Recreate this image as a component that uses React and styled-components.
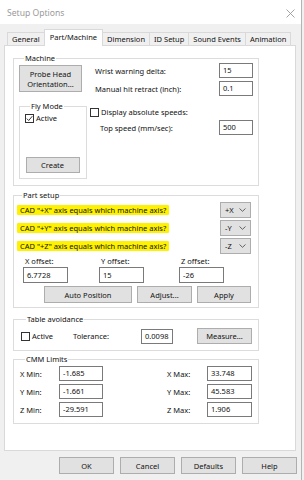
import React from "react";
import styled, { createGlobalStyle, css } from "styled-components";

const GlobalStyle = createGlobalStyle`
  html, body {
    margin: 0;
    padding: 0;
    background: #f0f0f0;
  }
  body {
    font-family: "Noto Sans", "Liberation Sans", sans-serif;
    font-size: 7.5px;
    line-height: 10px;
    color: #111;
  }
  * {
    box-sizing: border-box;
  }
`;

const Window = styled.div`
  width: 302px;
  height: 480px;
  background: #f0f0f0;
  border-right: 1px solid #b4b4b4;
  display: flex;
  flex-direction: column;
`;

const TitleBar = styled.div`
  height: 24px;
  flex-shrink: 0;
  background: #fff;
  display: flex;
  align-items: center;
  justify-content: space-between;
  padding: 2px 6px 0 7px;
`;
const Title = styled.span`
  font-size: 8.6px;
  color: #9a9a9a;
`;

const TabStrip = styled.div`
  display: flex;
  align-items: flex-end;
  height: 16px;
  margin-top: 5px;
  padding-left: 7px;
  position: relative;
  z-index: 1;
`;
const Tab = styled.div`
  height: 13px;
  padding: 0 4px;
  line-height: 12px;
  border: 1px solid #d9d9d9;
  border-bottom: none;
  margin-right: -1px;
  background: #f0f0f0;
  white-space: nowrap;
  ${(p) =>
    p.active &&
    css`
      height: 17px;
      margin-bottom: -1px;
      padding: 1px 5px 0;
      background: #fff;
    `}
`;

const Panel = styled.div`
  margin-left: 4px;
  width: 292px;
  height: 406px;
  background: #fff;
  border: 1px solid #d9d9d9;
  padding: 7px 0 0 8px;
  display: flex;
  flex-direction: column;
`;

const Group = styled.fieldset`
  margin: ${(p) => p.mt || 0}px 0 0;
  width: ${(p) => p.w || 246}px;
  min-width: 0;
  border: 1px solid #dcdcdc;
  padding: ${(p) => p.pad};
`;
const Legend = styled.legend`
  margin-left: 5px;
  padding: 0 1px;
  line-height: 10px;
`;

const MachineGrid = styled.div`
  display: grid;
  grid-template-columns: 68px 1fr;
  column-gap: 3px;
`;
const LeftCol = styled.div`
  display: flex;
  flex-direction: column;
`;
const RightCol = styled.div`
  display: flex;
  flex-direction: column;
`;

const Button = styled.div`
  width: ${(p) => p.w}px;
  height: ${(p) => p.h || 17}px;
  background: #e1e1e1;
  border: 1px solid #adadad;
  display: flex;
  align-items: center;
  justify-content: center;
  text-align: center;
  margin-top: ${(p) => p.mt || 0}px;
  flex-shrink: 0;
`;

const FieldRow = styled.div`
  display: flex;
  align-items: center;
  justify-content: space-between;
  height: ${(p) => p.h || 15}px;
  margin-top: ${(p) => p.mt || 0}px;
  padding-left: ${(p) => p.pl || 0}px;
`;

const Input = styled.div`
  width: ${(p) => p.w}px;
  height: ${(p) => p.h || 15}px;
  border: 1px solid #7a7a7a;
  background: #fff;
  padding-left: 3px;
  line-height: ${(p) => (p.h || 15) - 2}px;
`;

const CheckLabel = styled.label`
  display: flex;
  align-items: center;
  gap: 2px;
  height: 10px;
`;
const Box = styled.span`
  width: 9px;
  height: 9px;
  border: 1px solid #333;
  background: #fff;
  display: flex;
  align-items: center;
  justify-content: center;
`;

const Check = ({ checked, children }) => (
  <CheckLabel>
    <Box>
      {checked && (
        <svg width="7" height="7" viewBox="0 0 7 7">
          <path d="M0.8 3.6 L2.7 5.5 L6.3 1.2" fill="none" stroke="#222" strokeWidth="0.9" />
        </svg>
      )}
    </Box>
    {children}
  </CheckLabel>
);

const AxisRow = styled.div`
  display: flex;
  align-items: center;
  justify-content: space-between;
  height: 16px;
  margin-top: ${(p) => p.mt || 0}px;
`;
const Highlight = styled.span`
  background: #fff200;
  padding: 0 3px;
  line-height: 10px;
  border-radius: 1px;
`;
const Select = styled.div`
  width: 31px;
  height: 16px;
  background: #e1e1e1;
  border: 1px solid #adadad;
  display: flex;
  align-items: center;
  justify-content: space-between;
  padding: 0 4px 0 4px;
`;

const OffsetGrid = styled.div`
  display: grid;
  grid-template-columns: 76px 80px 1fr;
  padding-left: 6px;
  margin-top: 2px;
`;
const OffsetLabel = styled.span`
  padding-left: 2px;
  height: 11px;
`;
const ButtonRow = styled.div`
  display: flex;
  justify-content: ${(p) => p.justify || "flex-end"};
  gap: ${(p) => p.gap || 5}px;
  margin-top: ${(p) => p.mt || 0}px;
  padding-right: ${(p) => p.pr || 0}px;
`;

const AvoidRow = styled.div`
  display: grid;
  grid-template-columns: 52px 68px 56px 1fr;
  align-items: center;
  height: 16px;
`;

const LimitsGrid = styled.div`
  display: grid;
  grid-template-columns: 39px 44px 64px 40px 45px;
  grid-auto-rows: 15px;
  row-gap: 3px;
  align-items: center;
`;

const Footer = styled.div`
  display: flex;
  justify-content: flex-end;
  gap: 6px;
  padding-right: 4px;
  margin-top: 6px;
`;

const Chevron = () => (
  <svg width="7" height="4" viewBox="0 0 7 4">
    <path d="M0.5 0.5 L3.5 3.3 L6.5 0.5" fill="none" stroke="#555" strokeWidth="0.9" />
  </svg>
);

const tabs = ["General", "Part/Machine", "Dimension", "ID Setup", "Sound Events", "Animation"];
const axes = [
  ["+X", "+X"],
  ["+Y", "-Y"],
  ["+Z", "-Z"],
];
const limits = [
  ["X Min:", "-1.685", "X Max:", "33.748"],
  ["Y Min:", "-1.661", "Y Max:", "45.583"],
  ["Z Min:", "-29.591", "Z Max:", "1.906"],
];

export default function App() {
  return (
    <>
      <GlobalStyle />
      <Window>
        <TitleBar>
          <Title>Setup Options</Title>
          <svg width="9" height="9" viewBox="0 0 9 9">
            <path d="M0.5 0.5 L8.5 8.5 M8.5 0.5 L0.5 8.5" stroke="#9a9a9a" strokeWidth="0.9" />
          </svg>
        </TitleBar>

        <TabStrip>
          {tabs.map((t) => (
            <Tab key={t} active={t === "Part/Machine"}>
              {t}
            </Tab>
          ))}
        </TabStrip>

        <Panel>
          <Group pad="0 5px 6px 5px">
            <Legend>Machine</Legend>
            <MachineGrid>
              <LeftCol>
                <Button w={63} h={27} mt={2}>
                  Probe Head
                  <br />
                  Orientation...
                </Button>
                <Group w={68} mt={9} pad="2px 5px 5px 5px" style={{ height: 78 }}>
                  <Legend>Fly Mode</Legend>
                  <Check checked>Active</Check>
                  <ButtonRow mt={34} pr={1} justify="center">
                    <Button w={54} h={16}>
                      Create
                    </Button>
                  </ButtonRow>
                </Group>
              </LeftCol>
              <RightCol>
                <FieldRow pl={5}>
                  <span>Wrist warning delta:</span>
                  <Input w={34}>15</Input>
                </FieldRow>
                <FieldRow pl={5} mt={3}>
                  <span>Manual hit retract (inch):</span>
                  <Input w={34}>0.1</Input>
                </FieldRow>
                <FieldRow h={10} mt={11}>
                  <Check>Display absolute speeds:</Check>
                </FieldRow>
                <FieldRow pl={10} mt={3}>
                  <span>Top speed (mm/sec):</span>
                  <Input w={34}>500</Input>
                </FieldRow>
              </RightCol>
            </MachineGrid>
          </Group>

          <Group mt={4} pad="2px 7px 4px 3px">
            <Legend>Part setup</Legend>
            {axes.map(([cad, mach], i) => (
              <AxisRow key={cad} mt={i ? 2 : 0}>
                <Highlight>CAD "{cad}" axis equals which machine axis?</Highlight>
                <Select>
                  <span>{mach}</span>
                  <Chevron />
                </Select>
              </AxisRow>
            ))}
            <OffsetGrid>
              <OffsetLabel>X offset:</OffsetLabel>
              <OffsetLabel>Y offset:</OffsetLabel>
              <OffsetLabel>Z offset:</OffsetLabel>
              <Input w={45} h={16}>6.7728</Input>
              <Input w={45} h={16}>15</Input>
              <Input w={45} h={16}>-26</Input>
            </OffsetGrid>
            <ButtonRow mt={3} gap={5}>
              <Button w={88}>Auto Position</Button>
              <Button w={55}>Adjust...</Button>
              <Button w={54}>Apply</Button>
            </ButtonRow>
          </Group>

          <Group mt={6} pad="4px 5px 6px 7px">
            <Legend>Table avoidance</Legend>
            <AvoidRow>
              <Check>Active</Check>
              <span>Tolerance:</span>
              <Input w={32} h={15}>0.0098</Input>
              <Button w={55} h={16}>
                Measure...
              </Button>
            </AvoidRow>
          </Group>

          <Group mt={3} pad="2px 5px 6px 6px">
            <Legend>CMM Limits</Legend>
            <LimitsGrid>
              {limits.map(([a, av, b, bv]) => (
                <React.Fragment key={a}>
                  <span>{a}</span>
                  <Input w={44}>{av}</Input>
                  <span />
                  <span>{b}</span>
                  <Input w={45}>{bv}</Input>
                </React.Fragment>
              ))}
            </LimitsGrid>
          </Group>
        </Panel>

        <Footer>
          <Button w={55}>OK</Button>
          <Button w={55}>Cancel</Button>
          <Button w={55}>Defaults</Button>
          <Button w={55}>Help</Button>
        </Footer>
      </Window>
    </>
  );
}
